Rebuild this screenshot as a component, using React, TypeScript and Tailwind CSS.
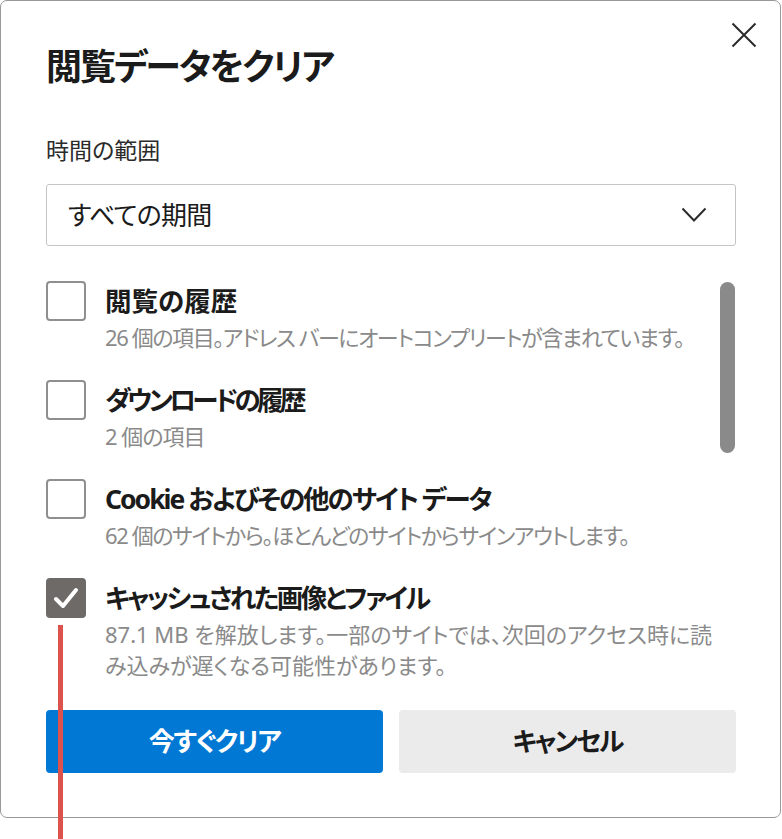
import React from "react"

type Item = {
  title: string
  titleClass: string
  lines: string[]
  lineClass: string
  checked?: boolean
}

const items: Item[] = [
  {
    title: "閲覧の履歴",
    titleClass: "tracking-[0px]",
    lines: ["26 個の項目。アドレス バーにオートコンプリートが含まれています。"],
    lineClass: "tracking-[-1.4px]",
  },
  {
    title: "ダウンロードの履歴",
    titleClass: "tracking-[-3.6px]",
    lines: ["2 個の項目"],
    lineClass: "tracking-[-1px]",
  },
  {
    title: "Cookie およびその他のサイト データ",
    titleClass: "tracking-[-2px]",
    lines: ["62 個のサイトから。ほとんどのサイトからサインアウトします。"],
    lineClass: "tracking-[-1.4px]",
  },
  {
    title: "キャッシュされた画像とファイル",
    titleClass: "tracking-[-2.5px]",
    lines: ["87.1 MB を解放します。一部のサイトでは、次回のアクセス時に読", "み込みが遅くなる可能性があります。"],
    lineClass: "tracking-[0px]",
    checked: true,
  },
]

function Checkbox({ checked }: { checked?: boolean }) {
  if (checked) {
    return (
      <div className="w-[40px] h-[40px] shrink-0 rounded-[4px] bg-[#6e6a68]">
        <svg width="40" height="40" viewBox="0 0 40 40" fill="none">
          <path d="M10 21l7 7L30 12" stroke="white" strokeWidth="4" strokeLinecap="round" strokeLinejoin="round" />
        </svg>
      </div>
    )
  }
  return <div className="w-[40px] h-[40px] shrink-0 rounded-[4px] border-2 border-[#8f8f8f] bg-white" />
}

export default function App() {
  return (
    <div className="relative w-[782px] h-[839px] bg-white overflow-hidden font-['Noto_Sans','Noto_Sans_CJK_JP',sans-serif] [font-feature-settings:'palt']">
      <div className="w-[781px] h-[818px] border border-[#999] rounded-[7px] bg-white pl-[45px] pr-[44px]">
        <div className="flex items-start justify-between">
          <h1 className="mt-[44px] text-[36px] leading-[44px] font-bold tracking-[-2px] text-[#1b1b1b]">閲覧データをクリア</h1>
          <button className="mt-[21px] mr-[-21px] w-[26px] h-[26px] flex items-center justify-center">
            <svg width="26" height="26" viewBox="0 0 26 26" fill="none">
              <path d="M1.5 1.5l23 23M24.5 1.5l-23 23" stroke="#2b2b2b" strokeWidth="2" />
            </svg>
          </button>
        </div>

        <div className="mt-[47px] text-[23px] leading-[28px] text-[#2b2b2b]">時間の範囲</div>

        <div className="mt-[20px] h-[62px] border border-[#c4c4c4] rounded-[3px] flex items-center justify-between pl-[21px] pr-[28px]">
          <span className="text-[26px] leading-[30px] tracking-[-0.8px] text-[#1b1b1b]">すべての期間</span>
          <svg width="26" height="16" viewBox="0 0 26 16" fill="none">
            <path d="M1.5 1.5l11.5 12 11.5-12" stroke="#2b2b2b" strokeWidth="2" />
          </svg>
        </div>

        <div className="mt-[35px] flex">
          <div className="flex-1 flex flex-col gap-[27px]">
            {items.map((it) => (
              <div key={it.title} className="flex gap-[19px]">
                <Checkbox checked={it.checked} />
                <div className="flex flex-col">
                  <div
                    className={`h-[40px] flex items-center text-[26.5px] leading-[40px] font-bold text-[#1b1b1b] whitespace-nowrap ${it.titleClass}`}
                  >
                    {it.title}
                  </div>
                  <div className={`mt-[1px] text-[22px] leading-[31px] text-[#8a8a8a] whitespace-nowrap ${it.lineClass}`}>
                    {it.lines.map((l) => (
                      <div key={l}>{l}</div>
                    ))}
                  </div>
                </div>
              </div>
            ))}
          </div>
          <div className="w-[16px] shrink-0 pt-[1px]">
            <div className="h-[171px] w-[15px] rounded-full bg-[#8a8a8a]" />
          </div>
        </div>

        <div className="mt-[29px] flex gap-[16px]">
          <button className="flex-1 h-[63px] rounded-[4px] bg-[#0078d4] text-white text-[26px] font-bold tracking-[-1.5px]">
            今すぐクリア
          </button>
          <button className="flex-1 h-[63px] rounded-[4px] bg-[#ebebeb] text-[#1b1b1b] text-[26px] font-bold tracking-[-2px]">
            キャンセル
          </button>
        </div>
      </div>

      <div className="absolute left-[58px] top-[625px] w-[5px] h-[214px] bg-[#de524e]" />
    </div>
  )
}
